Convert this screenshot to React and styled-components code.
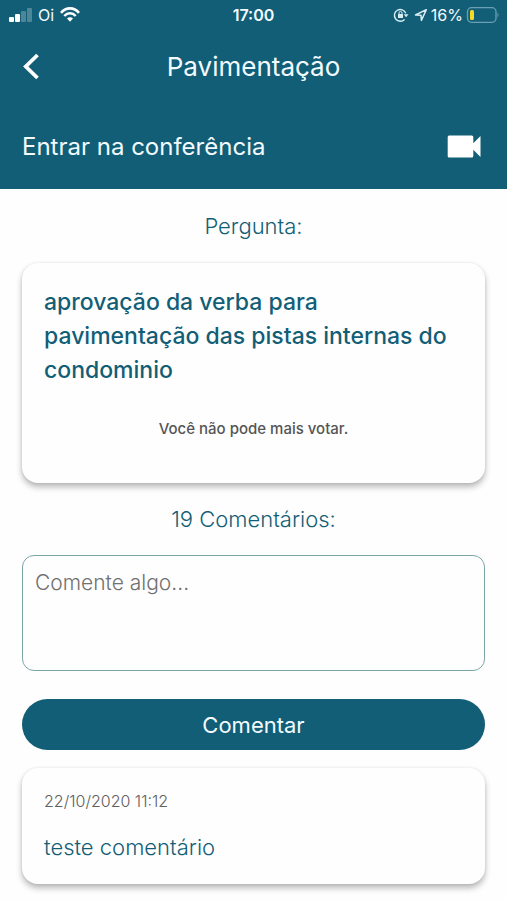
import React from "react";
import styled, { createGlobalStyle } from "styled-components";

const teal = "#125e77";

const GlobalStyle = createGlobalStyle`
  *, *::before, *::after { box-sizing: border-box; }
  body {
    margin: 0;
    background: #fefefe;
    color: ${teal};
    font-family: Inter, "Liberation Sans", sans-serif;
  }
  button, textarea { font: inherit; }
  h1, h2, p { margin: 0; font-weight: 400; }
`;

const Screen = styled.div`
  min-height: 100vh;
`;

const Header = styled.header`
  background: ${teal};
  color: #f2fbff;
`;

const StatusBar = styled.div`
  display: grid;
  grid-template-columns: 1fr auto 1fr;
  align-items: center;
  height: 30px;
  padding: 0 8px;
  font-size: 16px;
  line-height: 20px;
`;

const StatusGroup = styled.div`
  display: flex;
  align-items: center;
  justify-content: ${(p) => (p.$end ? "flex-end" : "flex-start")};
  gap: ${(p) => (p.$end ? 3 : 6)}px;
`;

const Clock = styled.time`
  font-weight: 600;
`;

const TitleBar = styled.div`
  display: grid;
  grid-template-columns: 32px 1fr 32px;
  align-items: center;
  height: 74px;
  padding: 0 16px;
`;

const IconButton = styled.button`
  display: flex;
  align-items: center;
  justify-content: center;
  width: 32px;
  height: 40px;
  padding: 0;
  border: 0;
  background: none;
  color: #fff;
  cursor: pointer;
`;

const Title = styled.h1`
  font-size: 26px;
  line-height: 32px;
  text-align: center;
`;

const ConferenceLink = styled.a`
  display: flex;
  align-items: center;
  justify-content: space-between;
  height: 85px;
  padding: 0 26px 0 22px;
  color: inherit;
  font-size: 24px;
  line-height: 32px;
  text-decoration: none;
`;

const Content = styled.main`
  display: flex;
  flex-direction: column;
  padding: 20px 22px 16px;
`;

const SectionTitle = styled.h2`
  font-size: 22px;
  font-weight: 300;
  line-height: 34px;
  text-align: center;
`;

const Card = styled.section`
  padding: 22px;
  border-radius: 16px;
  background: #fefefe;
  box-shadow: 0 4px 6px rgba(0, 0, 0, 0.28), 0 0 3px rgba(0, 0, 0, 0.08);
`;

const QuestionCard = styled(Card)`
  margin: 20px 0 19px;
`;

const CommentCard = styled(Card)`
  margin-top: 18px;
`;

const Question = styled.p`
  font-size: 23px;
  font-weight: 500;
  line-height: 34px;
`;

const Notice = styled.p`
  margin: 30px 0 20px;
  color: #555;
  font-size: 15px;
  font-weight: 500;
  line-height: 24px;
  text-align: center;
`;

const CommentForm = styled.form`
  display: flex;
  flex-direction: column;
  gap: 28px;
  margin-top: 19px;
`;

const CommentBox = styled.textarea`
  display: block;
  width: 100%;
  height: 116px;
  padding: 12px;
  border: 1px solid #7ba5a6;
  border-radius: 12px;
  background: #fefefe;
  color: ${teal};
  font-size: 21px;
  font-weight: 300;
  line-height: 30px;
  resize: none;
  &::placeholder { color: #707070; opacity: 1; }
`;

const SubmitButton = styled.button`
  height: 51px;
  border: 0;
  border-radius: 26px;
  background: ${teal};
  color: #f2fbff;
  font-size: 22px;
  line-height: 32px;
  cursor: pointer;
`;

const CommentDate = styled.time`
  display: block;
  color: #606060;
  font-size: 16px;
  font-weight: 300;
  line-height: 22px;
`;

const CommentText = styled.p`
  margin-top: 20px;
  font-size: 22px;
  font-weight: 300;
  line-height: 30px;
`;

const SignalIcon = () => (
  <svg width="24" height="16" viewBox="0 0 24 16" fill="#fff" aria-hidden="true">
    <rect x="1" y="10" width="5" height="5" rx="1" />
    <rect x="7" y="7" width="5" height="8" rx="1" />
    <rect x="13" y="4" width="5" height="11" rx="1" opacity=".25" />
    <rect x="19" y="1" width="5" height="14" rx="1" opacity=".25" />
  </svg>
);

const WifiIcon = () => (
  <svg width="20" height="16" viewBox="0 0 20 16" fill="none" stroke="#fff" strokeWidth="2.6" aria-hidden="true">
    <path d="M1 5.8C6-.1 14-.1 19 5.8M4.300 9C7.5 5.4 12.500 5.4 15.700 9" />
    <path d="M7 11.5C8.6 9.8 11.4 9.8 13 11.5L10 14.8Z" fill="#fff" stroke="none" />
  </svg>
);

const RotationLockIcon = () => (
  <svg width="18" height="16" viewBox="0 0 18 16" fill="none" stroke="#d9edf3" strokeWidth="1.4" aria-hidden="true">
    <path d="M11.6 12.4A5.9 5.9 0 1 1 12.8 6.2" />
    <path d="M10.7 7.2h4.8l-2.4 3Z" fill="#d9edf3" stroke="none" />
    <rect x="5" y="7" width="5" height="4" rx=".5" fill="#d9edf3" stroke="none" />
    <path d="M6 7.3V6a1.5 1.5 0 0 1 3 0v1.3" strokeWidth="1" />
  </svg>
);

const LocationIcon = () => (
  <svg width="14" height="14" viewBox="0 0 14 14" fill="none" stroke="#d9edf3" strokeWidth="1.5" strokeLinejoin="round" aria-hidden="true">
    <path d="M1.5 7 12.3 1.7 7.4 12.4 7 7.2Z" />
  </svg>
);

const BatteryIcon = () => (
  <svg width="33" height="16" viewBox="0 0 33 16" aria-hidden="true">
    <rect x="1.500" y=".7" width="28.500" height="14.6" rx="4" fill="none" stroke="#6ba0b2" strokeWidth="1.3" />
    <rect x="4" y="3" width="4" height="10" rx="1.5" fill="#f5dc23" />
    <path d="M31.500 5.5q2 2.5 0 5Z" fill="#6ba0b2" />
  </svg>
);

const BackIcon = () => (
  <svg width="18" height="28" viewBox="0 0 18 28" fill="none" stroke="currentColor" strokeWidth="3.8" aria-hidden="true">
    <path d="M14.500 2 2.800 13.500 14.500 25" />
  </svg>
);

const CameraIcon = () => (
  <svg width="34" height="23" viewBox="0 0 34 23" fill="#fff" aria-hidden="true">
    <path d="M2 .5h22.800q1.500 0 1.500 1.500v6.300L33.500 1v21l-7.200-7.300V21q0 1.500-1.500 1.500H2Q.7 22.500.7 21V2Q.7.5 2 .5Z" />
  </svg>
);

export default function App() {
  return (
    <Screen>
      <GlobalStyle />
      <Header>
        <StatusBar>
          <StatusGroup>
            <SignalIcon />
            <span>Oi</span>
            <WifiIcon />
          </StatusGroup>
          <Clock>17:00</Clock>
          <StatusGroup $end>
            <RotationLockIcon />
            <LocationIcon />
            <span>16%</span>
            <BatteryIcon />
          </StatusGroup>
        </StatusBar>
        <TitleBar>
          <IconButton type="button" aria-label="Voltar">
            <BackIcon />
          </IconButton>
          <Title>Pavimentação</Title>
        </TitleBar>
        <ConferenceLink href="#conferencia">
          <span>Entrar na conferência</span>
          <CameraIcon />
        </ConferenceLink>
      </Header>
      <Content>
        <SectionTitle>Pergunta:</SectionTitle>
        <QuestionCard>
          <Question>
            aprovação da verba para pavimentação das pistas internas do condominio
          </Question>
          <Notice>Você não pode mais votar.</Notice>
        </QuestionCard>
        <SectionTitle>19 Comentários:</SectionTitle>
        <CommentForm onSubmit={(e) => e.preventDefault()}>
          <CommentBox aria-label="Comentário" placeholder="Comente algo..." />
          <SubmitButton type="submit">Comentar</SubmitButton>
        </CommentForm>
        <CommentCard as="article">
          <CommentDate dateTime="2020-10-22T11:12">22/10/2020 11:12</CommentDate>
          <CommentText>teste comentário</CommentText>
        </CommentCard>
      </Content>
    </Screen>
  );
}
